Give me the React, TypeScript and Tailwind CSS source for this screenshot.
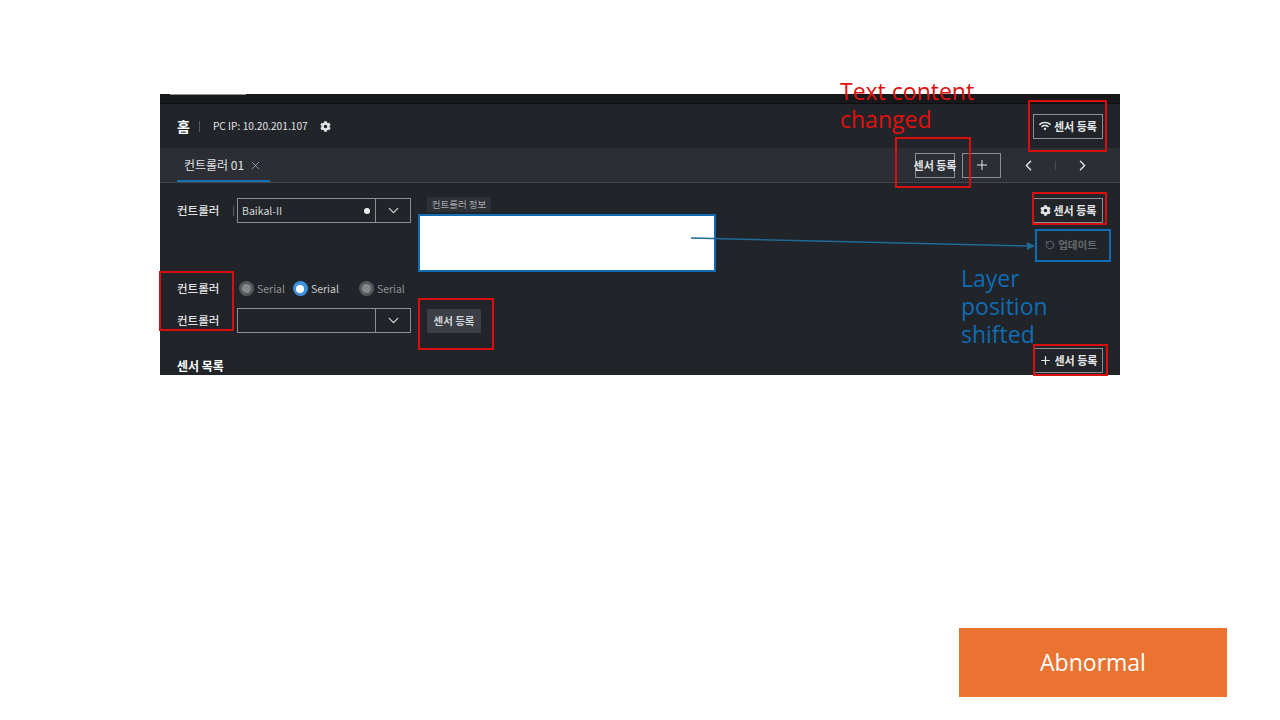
import { ChevronDown, ChevronLeft, ChevronRight, Plus, RotateCcw, X } from 'lucide-react';
import { FaCog, FaWifi } from 'react-icons/fa';
import type { ReactNode } from 'react';

const FONT = "font-['Noto_Sans_CJK_KR','Noto_Sans',sans-serif]";
const NOTE_FONT = "font-['Open_Sans','Noto_Sans',sans-serif]";

function OutlineButton({ icon }: { icon: ReactNode }) {
  return (
    <button className="flex h-[25px] w-[70px] items-center justify-center gap-[3px] border border-[#8b8e92] text-[11px] font-bold text-[#e6e7e8]">
      {icon}
      센서 등록
    </button>
  );
}

function Select({ value }: { value?: string }) {
  return (
    <div className="flex h-[25px] w-[174px] border border-[#8b8e92] text-[#d5d6d8]">
      <div className="flex flex-1 items-center justify-between px-[5px] pl-[4px] text-[10.5px]">
        <span>{value}</span>
        {value && <span className="h-[6px] w-[6px] rounded-full bg-[#eeeeee]" />}
      </div>
      <div className="flex w-[35px] items-center justify-center border-l border-[#8b8e92]">
        <ChevronDown size={17} strokeWidth={1.75} />
      </div>
    </div>
  );
}

function Radio({ active, className }: { active?: boolean; className: string }) {
  return (
    <span className={`flex items-center gap-[3px] text-[10.5px] ${active ? 'text-[#c9cacc]' : 'text-[#8e9094]'} ${className}`}>
      {active ? (
        <span className="flex h-[15px] w-[15px] items-center justify-center rounded-full bg-[#3f8fe0]">
          <span className="h-[8px] w-[8px] rounded-full bg-white" />
        </span>
      ) : (
        <span className="flex h-[15px] w-[15px] items-center justify-center rounded-full bg-[#55585c]">
          <span className="h-[9px] w-[9px] rounded-full bg-[#86888b]" />
        </span>
      )}
      Serial
    </span>
  );
}

function Annotations() {
  const red = 'absolute border-2 border-[#d80f0f]';
  return (
    <>
      <div className={`${red} left-[1028px] top-[100px] h-[52px] w-[79px]`} />
      <div className={`${red} left-[895px] top-[137px] h-[51px] w-[76px]`} />
      <div className={`${red} left-[1032px] top-[192px] h-[33px] w-[75px]`} />
      <div className={`${red} left-[1033px] top-[344px] h-[32px] w-[75px]`} />
      <div className={`${red} left-[159px] top-[271px] h-[60px] w-[75px]`} />
      <div className={`${red} left-[418px] top-[298px] h-[52px] w-[76px]`} />
      <div className="absolute left-[1035px] top-[229px] h-[33px] w-[76px] border-2 border-[#0f6cb5]" />
      <svg className="absolute left-[680px] top-[230px]" width={360} height={24} viewBox="0 0 360 24">
        <path d="M11 8 L350 16" stroke="#1f6a94" strokeWidth={1.5} fill="none" />
        <path d="M355 16 L347 12 L347 20 Z" fill="#1f6a94" />
      </svg>
      <p className={`absolute left-[840px] top-[77px] w-[150px] text-[23px] leading-[28px] text-[#e01010] ${NOTE_FONT}`}>
        Text content changed
      </p>
      <p className={`absolute left-[961px] top-[264px] w-[100px] text-[23px] leading-[28px] text-[#0f6cb5] ${NOTE_FONT}`}>
        Layer position shifted
      </p>
    </>
  );
}

export default function App() {
  return (
    <div className={`relative h-[720px] w-[1280px] overflow-hidden bg-white pt-[94px] ${FONT}`}>
      <div className="ml-[160px] flex h-[281px] w-[960px] flex-col overflow-hidden bg-[#212429] text-[#e2e3e5]">
        <div className="h-[10px] shrink-0 border-b border-[#0c0d0f] bg-[#17181b]">
          <div className="ml-[10px] h-px w-[76px] bg-[#8b8e92]" />
        </div>

        <div className="flex h-[44px] shrink-0 items-center px-[17px]">
          <span className="text-[14px] font-bold text-white">홈</span>
          <span className="ml-[9px] h-[11px] w-px bg-[#55585c]" />
          <span className="ml-[13px] text-[10.2px]">PC IP: 10.20.201.107</span>
          <FaCog className="ml-[12px]" size={11} />
          <div className="ml-auto">
            <OutlineButton icon={<FaWifi size={12} />} />
          </div>
        </div>

        <div className="flex h-[35px] shrink-0 items-stretch border-b border-[#43464b] bg-[#2b2e35] pl-[17px]">
          <div className="flex w-[93px] items-center gap-[5px] border-b-2 border-[#156fae] pl-[7px] pt-[2px] text-[12px]">
            컨트롤러 01
            <X size={13} strokeWidth={1} />
          </div>
          <div className="ml-[645px] flex items-center">
            <span className="flex h-[25px] w-[40px] items-center justify-center whitespace-nowrap border border-[#8b8e92] text-[11px] font-bold">
              센서 등록
            </span>
            <span className="ml-[7px] flex h-[25px] w-[39px] items-center justify-center border border-[#8b8e92]">
              <Plus size={16} strokeWidth={1.5} />
            </span>
            <ChevronLeft className="ml-[19px]" size={17} strokeWidth={2} />
            <span className="ml-[18px] h-[9px] w-px bg-[#4b4e53]" />
            <ChevronRight className="ml-[18px]" size={17} strokeWidth={2} />
          </div>
        </div>

        <div className="flex flex-1 flex-col px-[17px] pt-[14px]">
          <div className="flex h-[75px] items-start">
            <div className="mt-[1px] flex h-[25px] items-center">
              <span className="w-[56px] text-[11.5px] font-medium">컨트롤러</span>
              <span className="h-[10px] w-px bg-[#55585c]" />
            </div>
            <div className="ml-[3px] mt-[1px]">
              <Select value="Baikal-II" />
            </div>
            <div className="ml-[7px] flex flex-col items-start">
              <span className="ml-[9px] flex h-[15px] w-[64px] items-center justify-center bg-[#2d3036] text-[9.5px] text-[#a5a7aa]">
                컨트롤러 정보
              </span>
              <div className="mt-[2px] h-[58px] w-[298px] border-2 border-[#0f6cb5] bg-white" />
            </div>
            <div className="ml-auto mt-[1px] flex flex-col items-end">
              <OutlineButton icon={<FaCog size={11} />} />
              <button className="mr-[-7px] mt-[9px] flex h-[25px] w-[74px] items-center justify-center gap-[3px] pr-[4px] text-[10.5px] font-bold text-[#66696d]">
                <RotateCcw size={10} strokeWidth={2.25} />
                업데이트
              </button>
            </div>
          </div>

          <div className="mt-[8px] flex h-[17px] items-center">
            <span className="w-[62px] text-[11.5px] font-medium">컨트롤러</span>
            <Radio className="" />
            <Radio active className="ml-[8px]" />
            <Radio className="ml-[20px]" />
          </div>

          <div className="mt-[11px] flex items-center">
            <span className="w-[60px] text-[11.5px] font-medium">컨트롤러</span>
            <Select />
            <button className="ml-[16px] flex h-[24px] w-[54px] items-center justify-center bg-[#3c3f45] text-[10.5px] font-bold text-[#d5d6d8]">
              센서 등록
            </button>
          </div>

          <div className="mt-[15px] flex items-start justify-between">
            <span className="mt-[9px] text-[12px] font-bold leading-[18px] text-white">센서 목록</span>
            <OutlineButton icon={<Plus size={13} strokeWidth={2.25} />} />
          </div>
        </div>
      </div>

      <div className={`ml-[959px] mt-[253px] flex h-[69px] w-[268px] items-center justify-center bg-[#ea7331] text-[23px] text-white ${NOTE_FONT}`}>
        Abnormal
      </div>

      <Annotations />
    </div>
  );
}
